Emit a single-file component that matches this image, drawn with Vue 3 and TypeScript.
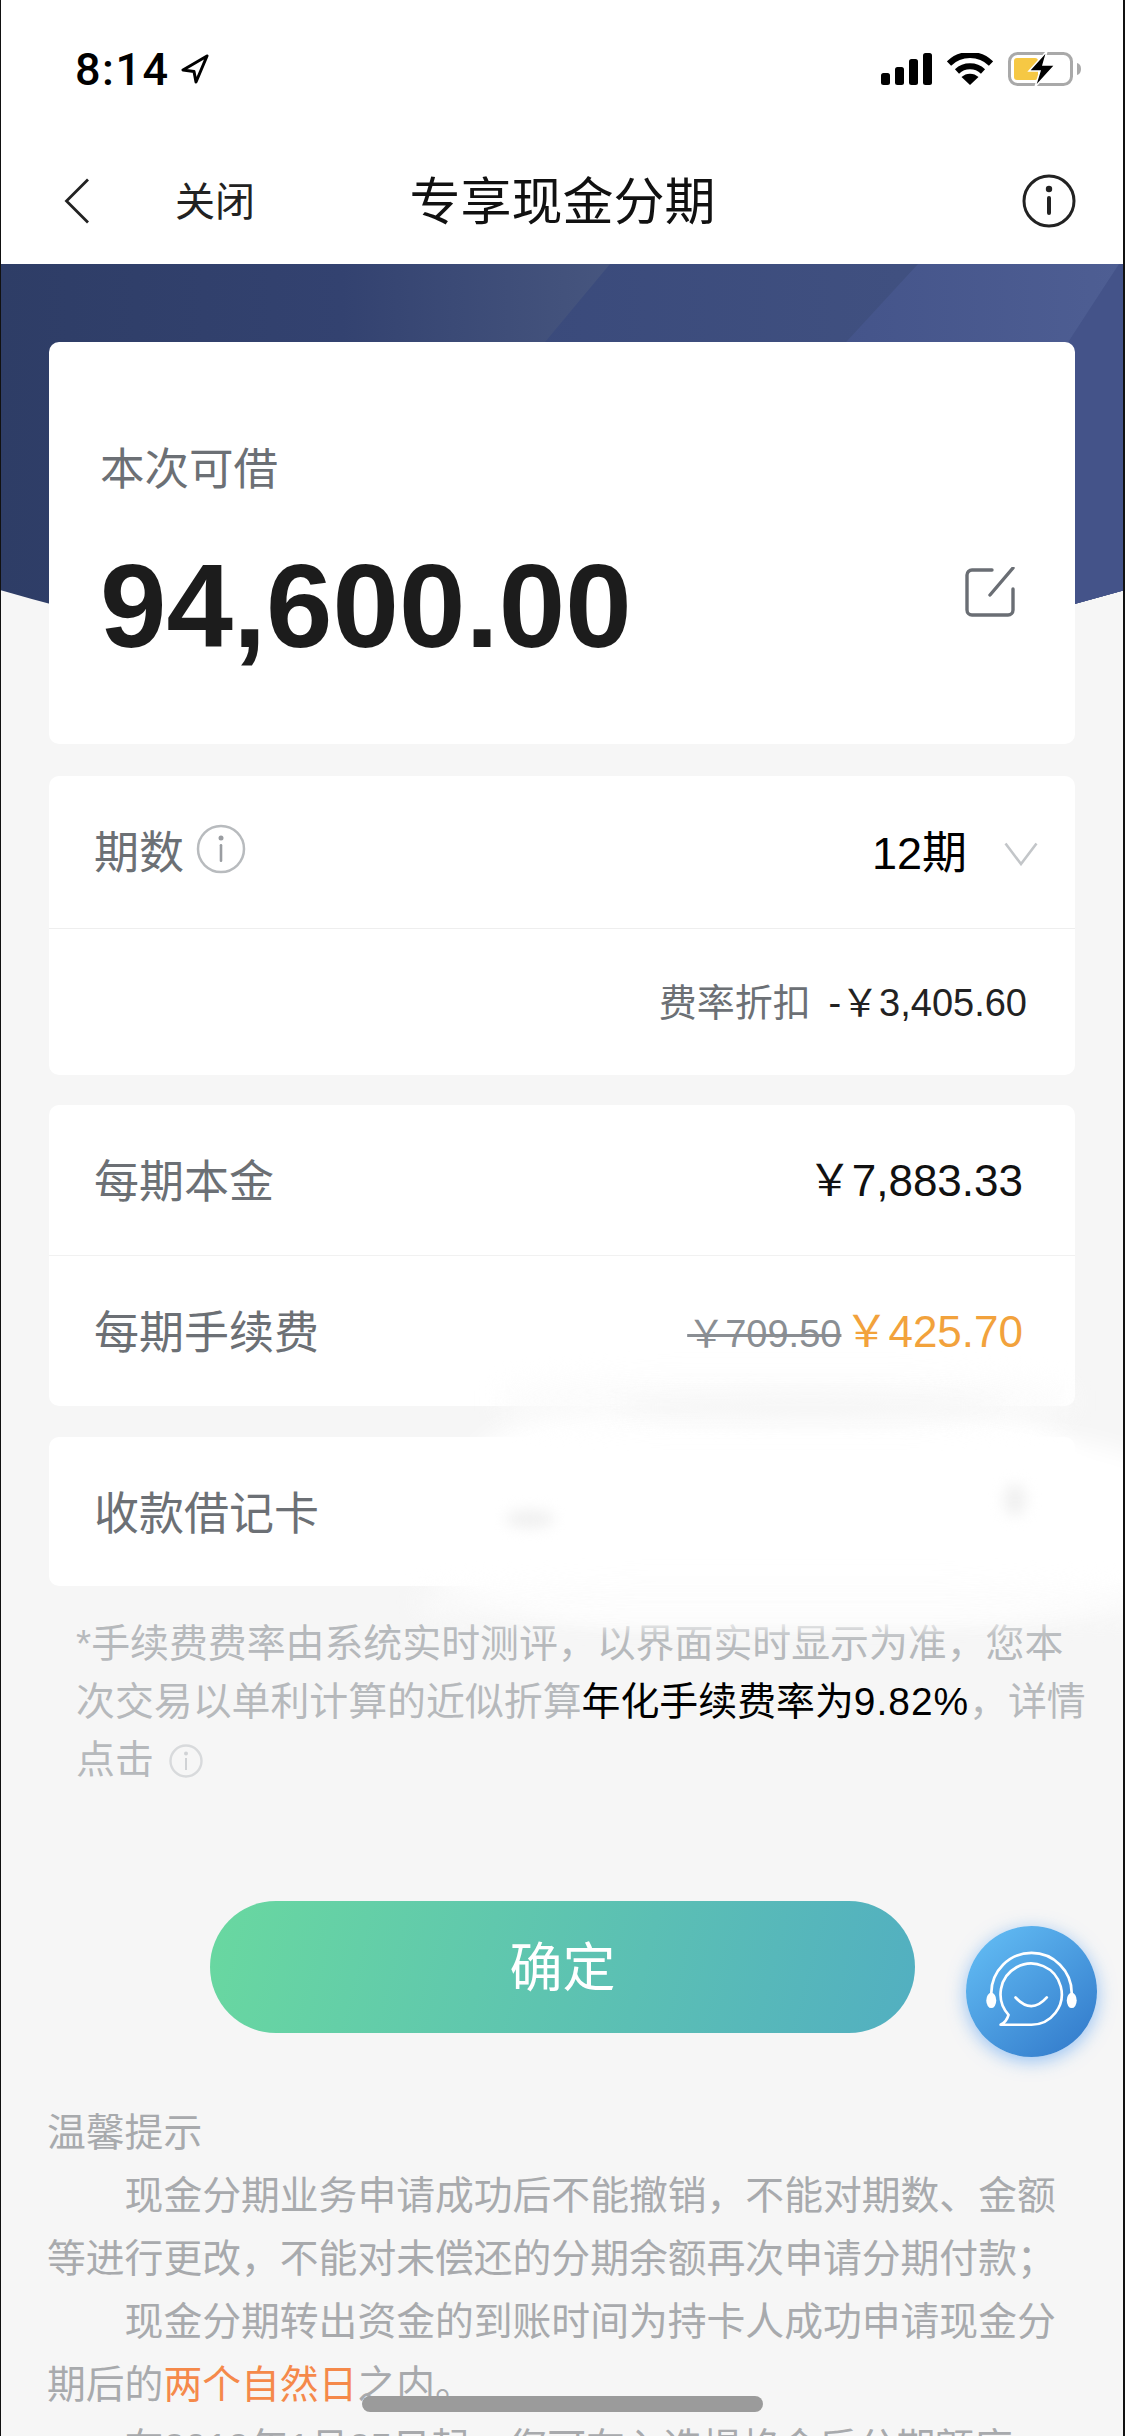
<template>
  <div class="page">
    <!-- blue header art sits behind the first card -->
    <svg class="hero" viewBox="0 0 1125 436" preserveAspectRatio="none">
      <defs>
        <linearGradient id="heroBase" gradientUnits="userSpaceOnUse" x1="0" x2="620" y1="0" y2="0">
          <stop offset="0" stop-color="#2e3d66" />
          <stop offset="0.55" stop-color="#334270" />
          <stop offset="1" stop-color="#47567f" />
        </linearGradient>
        <linearGradient id="heroMid" gradientUnits="userSpaceOnUse" x1="520" x2="900" y1="0" y2="0">
          <stop offset="0" stop-color="#3a4a7b" />
          <stop offset="1" stop-color="#405080" />
        </linearGradient>
        <linearGradient id="heroEnd" gradientUnits="userSpaceOnUse" x1="840" x2="1120" y1="0" y2="0">
          <stop offset="0" stop-color="#44548a" />
          <stop offset="1" stop-color="#4e5e93" />
        </linearGradient>
        <clipPath id="heroClip">
          <path d="M0 0H1125V326Q562 490 0 326Z" />
        </clipPath>
      </defs>
      <g clip-path="url(#heroClip)">
        <rect width="1125" height="436" fill="url(#heroBase)" />
        <polygon points="610,0 1125,0 1125,436 247,436" fill="url(#heroMid)" />
        <polygon points="918,0 1125,0 1125,436 517,436" fill="url(#heroEnd)" />
        <polygon points="1119,0 1125,0 1125,436 835,436" fill="#445389" />
      </g>
    </svg>

    <header class="status-bar">
      <div class="time">
        <span>8:14</span>
        <svg class="loc" viewBox="0 0 28 30" width="28" height="30">
          <path d="M26 2 2 16l11 1.500L15 28Z" fill="none" stroke="#000" stroke-width="3" stroke-linejoin="round" />
        </svg>
      </div>
      <div class="status-icons">
        <svg width="51" height="32" viewBox="0 0 51 32">
          <rect x="0" y="20" width="9" height="12" rx="2.500" />
          <rect x="14" y="14" width="9" height="18" rx="2.500" />
          <rect x="28" y="6" width="9" height="26" rx="2.500" />
          <rect x="42" y="0" width="9" height="32" rx="2.500" />
        </svg>
        <svg width="46" height="32" viewBox="0 0 46 32">
          <path d="M2 10.500a30 30 0 0 1 42 0" fill="none" stroke="#000" stroke-width="6" />
          <path d="M10 18.500a19 19 0 0 1 26 0" fill="none" stroke="#000" stroke-width="6" />
          <path d="M23 32 14.500 24a12.500 12.500 0 0 1 17 0Z" />
        </svg>
        <svg width="74" height="36" viewBox="0 0 74 36">
          <rect x="1.500" y="2.500" width="62" height="31" rx="8" fill="none" stroke="#a9a9a9" stroke-width="3" />
          <rect x="6" y="7" width="24" height="22" rx="3" fill="#f6c844" />
          <path d="M69 12q4 1 4 6t-4 6Z" fill="#a9a9a9" />
          <path d="M39 0 21 20h11l-5 16 20-22H35Z" stroke="#fff" stroke-width="1.500" />
        </svg>
      </div>
    </header>

    <nav class="nav">
      <div class="nav-left">
        <svg width="26" height="46" viewBox="0 0 26 46">
          <path d="M24 1.500 2.500 23 24 44.500" fill="none" stroke="#222" stroke-width="2.800" />
        </svg>
        <span class="close">关闭</span>
      </div>
      <div class="title">专享现金分期</div>
      <div class="nav-right">
        <svg width="54" height="54" viewBox="0 0 54 54">
          <circle cx="27" cy="27" r="25" fill="none" stroke="#222" stroke-width="3" />
          <circle cx="27" cy="15" r="3.200" fill="#222" />
          <rect x="25" y="22" width="4" height="19" rx="2" fill="#222" />
        </svg>
      </div>
    </nav>

    <main class="content">
      <section class="card amount-card">
        <div class="amount-label">本次可借</div>
        <div class="amount-row">
          <span class="amount">94,600.00</span>
          <svg class="edit" width="50" height="50" viewBox="0 0 50 50">
            <path d="M27 3H7a5 5 0 0 0-5 5v35a5 5 0 0 0 5 5h36a5 5 0 0 0 5-5V22" fill="none" stroke="#6a6e74" stroke-width="3.400" stroke-linecap="round" />
            <path d="M25 28 48 1" fill="none" stroke="#6a6e74" stroke-width="3.400" stroke-linecap="round" />
          </svg>
        </div>
      </section>

      <section class="card term-card">
        <div class="row term-row">
          <div class="row-label">
            <span>期数</span>
            <svg width="50" height="50" viewBox="0 0 50 50">
              <circle cx="25" cy="25" r="23" fill="none" stroke="#b8bbbe" stroke-width="2.500" />
              <circle cx="25" cy="14" r="2.500" fill="#9a9da1" />
              <rect x="23.700" y="20" width="2.600" height="18" rx="1.300" fill="#9a9da1" />
            </svg>
          </div>
          <div class="term-value">
            <span>12期</span>
            <svg width="34" height="24" viewBox="0 0 34 24">
              <path d="M1.500 1.500 17 22 32.500 1.500" fill="none" stroke="#c3c6c9" stroke-width="2.600" />
            </svg>
          </div>
        </div>
        <div class="discount"><span class="discount-label">费率折扣</span><span class="discount-num"> -￥3,405.60</span></div>
      </section>

      <section class="card fee-card">
        <div v-for="row in feeRows" :key="row.label" class="row fee-row">
          <span class="row-text">{{ row.label }}</span>
          <span class="fee-value">
            <s v-if="row.oldValue" class="old-price">{{ row.oldValue }}</s>
            <span :class="{ 'now-price': row.oldValue }">{{ row.value }}</span>
          </span>
        </div>
      </section>

      <section class="card bank-card">
        <span class="row-text">收款借记卡</span>
      </section>

      <p class="note">
        *手续费费率由系统实时测评，以界面实时显示为准，您本次交易以单利计算的近似折算<span class="note-strong">年化手续费率为<span class="note-rate">9.82%</span></span>，详情点击
        <svg class="note-info" width="34" height="34" viewBox="0 0 34 34">
          <circle cx="17" cy="17" r="15.500" fill="none" stroke="#d8dadc" stroke-width="2.400" />
          <circle cx="17" cy="9.500" r="2" fill="#d0d2d5" />
          <rect x="16" y="14" width="2" height="12" fill="#d0d2d5" />
        </svg>
      </p>

      <button class="confirm" type="button"><span>确定</span></button>

      <div class="tips">
        <div>温馨提示</div>
        <p>现金分期业务申请成功后不能撤销，不能对期数、金额等进行更改，不能对未偿还的分期余额再次申请分期付款；</p>
        <p>现金分期转出资金的到账时间为持卡人成功申请现金分期后的<span class="tips-hot">两个自然日</span>之内。</p>
        <p>在2019年1月25日起，您可在入选提格金后分期额度</p>
      </div>
    </main>

    <!-- whited out card number -->
    <div class="smear">
      <i class="blob blob-a"></i>
      <i class="blob blob-b"></i>
      <i class="blob blob-c"></i>
      <i class="blob blob-d"></i>
      <i class="spot spot-a"></i>
      <i class="spot spot-b"></i>
      <i class="spot spot-c"></i>
    </div>

    <div class="service">
      <svg width="131" height="131" viewBox="0 0 394 394">
        <path d="M76 215V202a121 121 0 0 1 242 0V215" fill="none" stroke="#fff" stroke-width="8" />
        <ellipse cx="76" cy="224" rx="15" ry="23" fill="#fff" />
        <ellipse cx="318" cy="224" rx="15" ry="23" fill="#fff" />
        <path d="M128 267A92 92 0 1 1 197 297H104Q122 288 128 267Z" fill="none" stroke="#fff" stroke-width="8" stroke-linejoin="round" />
        <path d="M149 215Q197 267 243 215" fill="none" stroke="#fff" stroke-width="8" stroke-linecap="round" />
      </svg>
    </div>

    <div class="home-bar"></div>
    <div class="frame"></div>
  </div>
</template>

<script setup lang="ts">
interface FeeRow {
  label: string
  value: string
  oldValue?: string
}

const feeRows: FeeRow[] = [
  { label: '每期本金', value: '￥7,883.33' },
  { label: '每期手续费', value: '￥425.70', oldValue: '￥709.50' }
]
</script>

<style>
html,
body {
  margin: 0;
  background: #f6f6f6;
}
</style>

<style scoped>
.page {
  position: relative;
  width: 1125px;
  height: 2436px;
  overflow: hidden;
  background: #f6f6f6;
  color: #000;
  font-family: "Liberation Sans", "Noto Sans CJK SC", sans-serif;
}

.hero {
  position: absolute;
  left: 0;
  top: 264px;
  width: 1125px;
  height: 436px;
}

.status-bar {
  position: relative;
  height: 138px;
  background: #fff;
  display: flex;
  align-items: center;
  justify-content: space-between;
  padding: 0 43px 0 75px;
}

.time {
  display: flex;
  align-items: center;
  gap: 11px;
  font-family: Roboto, sans-serif;
  font-size: 45px;
  font-weight: 500;
  letter-spacing: 1.500px;
}

.status-icons {
  display: flex;
  align-items: center;
  gap: 15px;
}

.nav {
  position: relative;
  height: 126px;
  background: #fff;
  display: grid;
  grid-template-columns: 1fr auto 1fr;
  align-items: center;
  padding: 0 49px 0 64px;
}

.nav-left {
  display: flex;
  align-items: center;
  gap: 85px;
}

.close {
  font-size: 40px;
  color: #222;
  margin-bottom: 4px;
}

.title {
  font-size: 51px;
  color: #111;
  margin: 0 0 6px -15px;
}

.nav-right {
  display: flex;
  justify-content: flex-end;
}

.content {
  position: relative;
  padding: 78px 50px 0 49px;
}

.card {
  background: #fff;
  border-radius: 10px;
}

.amount-card {
  height: 402px;
  box-sizing: border-box;
  padding: 100px 60px 0 51px;
}

.amount-label {
  font-size: 44.500px;
  line-height: 56px;
  color: #6c7075;
}

.amount-row {
  display: flex;
  align-items: center;
  justify-content: space-between;
  height: 140px;
  margin-top: 37px;
}

.amount {
  font-size: 119.500px;
  font-weight: 700;
  color: #1c1c1c;
}

.edit {
  margin-bottom: 26px;
}

.term-card {
  margin-top: 32px;
  height: 299px;
}

.row {
  display: flex;
  align-items: center;
  justify-content: space-between;
}

.term-row {
  height: 153px;
  box-sizing: border-box;
  padding: 0 37px 0 45px;
  border-bottom: 1px solid #eeeeee;
}

.row-label {
  display: flex;
  align-items: center;
  gap: 12px;
  font-size: 45px;
  color: #6c7075;
  margin-bottom: 6px;
}

.term-value {
  display: flex;
  align-items: center;
  gap: 37px;
  font-size: 45px;
}

.term-value span {
  margin-bottom: 6px;
}

.term-value svg {
  margin-top: 4px;
}

.discount {
  height: 146px;
  box-sizing: border-box;
  padding: 0 48px 6px 0;
  display: flex;
  align-items: center;
  justify-content: flex-end;
  font-size: 38px;
  color: #6c7075;
  white-space: pre;
}

.discount-label {
  margin-right: 7px;
}

.discount-num {
  color: #222;
}

.fee-card {
  margin-top: 30px;
}

.fee-row {
  height: 150px;
  padding: 0 52px 0 45px;
}

.fee-row + .fee-row {
  border-top: 1px solid #f1f1f1;
}

.row-text {
  font-size: 45px;
  color: #6c7075;
  margin-bottom: 3px;
}

.fee-value {
  font-size: 44px;
  color: #111;
  margin-bottom: 6px;
}

.old-price {
  font-size: 38px;
  color: #8a8e93;
  margin-right: 3px;
}

.now-price {
  color: #f2a23c;
}

.bank-card {
  margin-top: 31px;
  height: 149px;
  display: flex;
  align-items: center;
  padding-left: 45px;
}

.note {
  margin: 29px 0 0 27px;
  width: 1018px;
  font-size: 38.900px;
  line-height: 58px;
  color: #b6b9bc;
}

.note-strong {
  color: #000;
}

.note-rate {
  letter-spacing: 1px;
}

.note-info {
  vertical-align: -5px;
  margin-left: 4px;
}

.confirm {
  display: block;
  width: 705px;
  height: 132px;
  margin: 112px 0 0 161px;
  padding: 0 0 6px;
  border: 0;
  border-radius: 66px;
  background: linear-gradient(105deg, #69d8a0, #52afc1);
  color: #fff;
  font-family: inherit;
  font-size: 53px;
}

.tips {
  margin: 68px -4px 0 -2px;
  font-size: 38.800px;
  line-height: 63px;
  color: #a8aaad;
}

.tips p {
  margin: 0;
  text-indent: 2em;
}

.tips-hot {
  color: #f5894a;
}

.smear {
  position: absolute;
  left: 0;
  top: 0;
  width: 1125px;
  height: 2436px;
  overflow: hidden;
  pointer-events: none;
}

.blob {
  position: absolute;
  background: #fff;
  border-radius: 30%;
  filter: blur(12px);
}

.blob-a {
  left: 470px;
  top: 1402px;
  width: 610px;
  height: 215px;
}

.blob-b {
  left: 430px;
  top: 1430px;
  width: 740px;
  height: 190px;
}

.blob-c {
  left: 500px;
  top: 1378px;
  width: 570px;
  height: 46px;
  opacity: 0.8;
  background: #fbfbfb;
}

.blob-d {
  left: 420px;
  top: 1585px;
  width: 740px;
  height: 34px;
  opacity: 0.8;
  background: #fcfcfc;
}

.spot {
  position: absolute;
  border-radius: 50%;
  background: #f0f0f0;
  filter: blur(7px);
}

.spot-a {
  left: 505px;
  top: 1510px;
  width: 50px;
  height: 18px;
}

.spot-b {
  left: 1004px;
  top: 1484px;
  width: 22px;
  height: 32px;
}

.spot-c {
  left: 620px;
  top: 1395px;
  width: 380px;
  height: 24px;
  background: #f6f6f6;
  filter: blur(10px);
}

.service {
  position: absolute;
  left: 966px;
  top: 1926px;
  width: 131px;
  height: 131px;
  border-radius: 50%;
  background: linear-gradient(140deg, #66c1f7, #2f76c8);
  box-shadow: 0 4px 18px rgba(70, 150, 240, 0.55);
}

.service svg {
  display: block;
}

.home-bar {
  position: absolute;
  left: 362px;
  top: 2396px;
  width: 401px;
  height: 16px;
  border-radius: 8px;
  background: #9b9b9b;
}

.frame {
  position: absolute;
  inset: 0;
  border-left: 1px solid #111;
  border-right: 2px solid #111;
  pointer-events: none;
}
</style>
